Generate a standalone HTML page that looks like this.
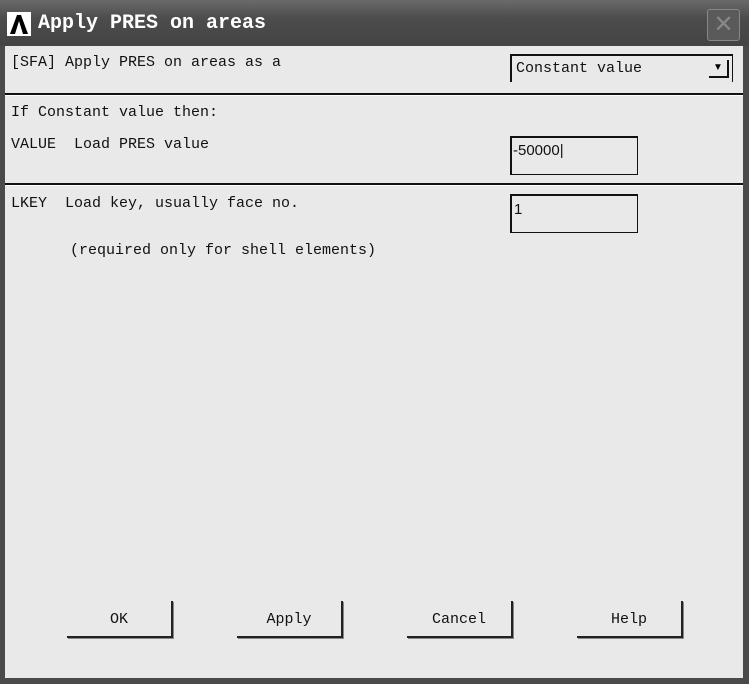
<!DOCTYPE html>
<html><head><style>
body{margin:0;width:749px;height:684px;background:#4a4a4a;position:relative;overflow:hidden;font-family:"Liberation Serif",serif;}
.title{position:absolute;left:0;top:0;width:749px;height:46px;background:linear-gradient(#6a6a6a,#4c4c4c 40%,#444);}
.logo{position:absolute;left:7px;top:12px;width:24px;height:24px;background:#fff;}
.tt{position:absolute;left:38px;top:12px;color:#fff;font-weight:bold;font-size:20px;font-family:"Liberation Mono",monospace;}
.x{position:absolute;left:707px;top:9px;width:31px;height:30px;border:1px solid #888;border-radius:3px;background:#5a5a5a;color:#888;font:24px "Liberation Sans",sans-serif;text-align:center;line-height:30px;}
.body{position:absolute;left:5px;top:46px;width:738px;height:632px;background:#e9e9e9;}
.t{position:absolute;color:#111;white-space:pre;font-family:"Liberation Mono",monospace;font-size:15px;}
.hr{position:absolute;left:0;width:738px;height:2px;background:#111;border-bottom:1px solid #fff;}
.box{position:absolute;background:#e9e9e9;border:1px solid #111;border-left-width:2px;border-top-width:2px;}
.btn{position:absolute;top:555px;width:104px;height:35px;border-right:2px solid #222;border-bottom:2px solid #222;box-shadow:1px 1px 0 #888;text-align:center;line-height:38px;font-size:15px;font-family:"Liberation Mono",monospace;color:#111;}
</style></head><body>
<div class="title">
<div class="logo"><svg width="24" height="24"><path d="M3 22 L10 3 L14 3 L21 22 L16 22 L12 9 L8 22Z" fill="#000"/></svg></div>
<div class="tt">Apply PRES on areas</div>
<div class="x">✕</div>
</div>
<div class="body">
<div class="t" style="left:6px;top:8px">[SFA] Apply PRES on areas as a</div>
<div class="box" style="left:505px;top:8px;width:220px;height:26px;border-right-width:1px;border-bottom:none">
<div class="t" style="left:4px;top:4px">Constant value</div>
<div style="position:absolute;right:3px;top:4px;width:18px;height:16px;border-right:2px solid #111;border-bottom:2px solid #111;text-align:center;font-size:10px;line-height:16px">▼</div>
</div>
<div class="hr" style="top:47px"></div>
<div class="t" style="left:6px;top:58px">If Constant value then:</div>
<div class="t" style="left:6px;top:90px">VALUE  Load PRES value</div>
<div class="box" style="left:505px;top:90px;width:125px;height:36px"><div class="t" style="left:1px;top:4px;font-family:'Liberation Sans',sans-serif;font-size:15px">-50000|</div></div>
<div class="hr" style="top:137px"></div>
<div class="t" style="left:6px;top:149px">LKEY  Load key, usually face no.</div>
<div class="box" style="left:505px;top:148px;width:125px;height:36px"><div class="t" style="left:2px;top:5px;font-family:'Liberation Sans',sans-serif;font-size:15px">1</div></div>
<div class="t" style="left:65px;top:196px">(required only for shell elements)</div>
<div class="btn" style="left:62px">OK</div>
<div class="btn" style="left:232px">Apply</div>
<div class="btn" style="left:402px">Cancel</div>
<div class="btn" style="left:572px">Help</div>
</div>
</body></html>
